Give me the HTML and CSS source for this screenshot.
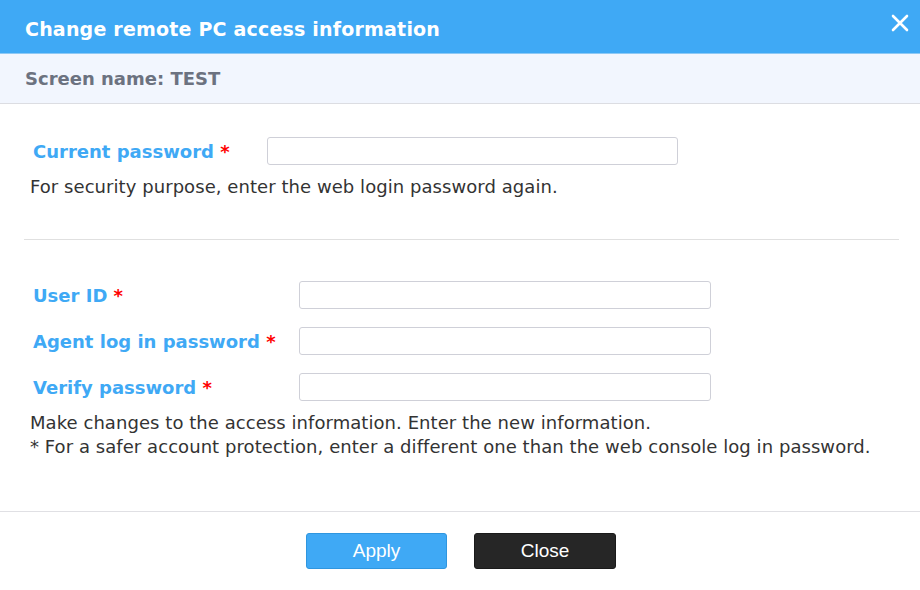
FILE: index.html
```html
<!DOCTYPE html>
<html>
<head>
<meta charset="utf-8">
<link rel="stylesheet" href="styles.css">
</head>
<body>
<div class="dialog">
  <div class="header">
    <div class="title">Change remote PC access information</div>
    <button class="close-x" aria-label="Close">
      <svg width="18" height="18" viewBox="0 0 18 18"><path d="M2 2 L16 16 M16 2 L2 16" stroke="#fff" stroke-width="2.6" stroke-linecap="round"/></svg>
    </button>
  </div>
  <div class="subheader">Screen name: TEST</div>
  <div class="content">
    <div class="section first">
      <div class="row row-a">
        <label class="label">Current password <span class="req">*</span></label>
        <input class="field" type="password">
      </div>
      <p class="help">For security purpose, enter the web login password again.</p>
    </div>
    <div class="divider"></div>
    <div class="section second">
      <div class="row row-b">
        <label class="label">User ID <span class="req">*</span></label>
        <input class="field" type="text">
      </div>
      <div class="row row-b">
        <label class="label">Agent log in password <span class="req">*</span></label>
        <input class="field" type="password">
      </div>
      <div class="row row-b">
        <label class="label">Verify password <span class="req">*</span></label>
        <input class="field" type="password">
      </div>
      <p class="help help2">Make changes to the access information. Enter the new information.<br>* For a safer account protection, enter a different one than the web console log in password.</p>
    </div>
  </div>
  <div class="footer">
    <button class="btn btn-apply">Apply</button>
    <button class="btn btn-close">Close</button>
  </div>
</div>
</body>
</html>
```
FILE: styles.css
```css
html, body {
  margin: 0;
  padding: 0;
  background: #fff;
}
body {
  font-family: "DejaVu Sans", Verdana, sans-serif;
  width: 920px;
  height: 590px;
  overflow: hidden;
}
.dialog {
  display: flex;
  flex-direction: column;
  height: 590px;
}
.header {
  height: 54px;
  box-sizing: border-box;
  background: #3fa9f5;
  display: flex;
  align-items: center;
  justify-content: space-between;
  padding: 4px 10px 0 25px;
  border-bottom: 1px solid #8ec9f5;
  flex-shrink: 0;
}
.title {
  color: #fff;
  font-weight: bold;
  font-size: 19px;
  letter-spacing: 0.2px;
}
.close-x {
  background: none;
  border: 0;
  padding: 0;
  width: 20px;
  height: 20px;
  display: flex;
  align-items: center;
  justify-content: center;
  margin-top: -12px;
  cursor: pointer;
}
.subheader {
  height: 50px;
  box-sizing: border-box;
  background: #f2f6fe;
  border-bottom: 1px solid #dcdde2;
  display: flex;
  align-items: center;
  padding-left: 25px;
  color: #6c7280;
  font-weight: bold;
  font-size: 18px;
  flex-shrink: 0;
}
.content {
  flex: 1;
  padding: 0 21px 0 24px;
}
.section.first {
  padding-top: 33px;
}
.row {
  display: grid;
  align-items: center;
  height: 28px;
  padding-left: 9px;
}
.row-a {
  grid-template-columns: 234px 411px;
}
.row-b {
  grid-template-columns: 266px 412px;
  margin-bottom: 18px;
}
.label {
  color: #3fa9f5;
  font-weight: bold;
  font-size: 18px;
}
.req {
  color: #f00;
}
.field {
  box-sizing: border-box;
  height: 28px;
  border: 1px solid #cfd0d8;
  border-radius: 3px;
  background: #fff;
  outline: none;
  padding: 0 6px;
}
.help {
  margin: 10px 0 0 6px;
  font-size: 18px;
  line-height: 24px;
  color: #333;
  letter-spacing: 0.06px;
}
.help2 {
  margin-top: -8px;
}
.divider {
  margin-top: 40px;
  height: 1px;
  background: #e0e0e0;
}
.section.second {
  padding-top: 41px;
}
.footer {
  border-top: 1px solid #e0e0e4;
  height: 79px;
  display: flex;
  justify-content: center;
  align-items: flex-start;
  gap: 27px;
  padding-top: 21px;
  box-sizing: border-box;
  flex-shrink: 0;
}
.btn {
  width: 141px;
  height: 36px;
  border-radius: 3px;
  font-family: "Liberation Sans", Arial, sans-serif;
  font-size: 19px;
  color: #fff;
  cursor: pointer;
}
.btn-apply {
  background: #3fa9f5;
  border: 1px solid #2f96df;
  margin-left: 2px;
}
.btn-close {
  background: #262626;
  border: 1px solid #1a1a1a;
  width: 142px;
}
```
